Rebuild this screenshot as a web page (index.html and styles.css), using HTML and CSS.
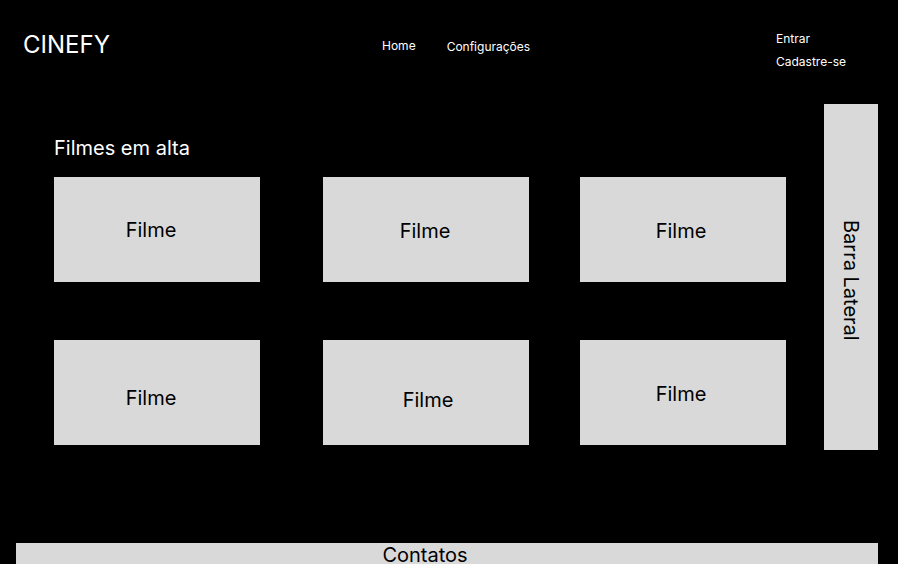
FILE: index.html
```html
<!DOCTYPE html>
<html lang="pt-BR">
<head>
<meta charset="utf-8">
<title>CINEFY</title>
<link rel="stylesheet" href="styles.css">
</head>
<body>
<header class="topbar">
  <div class="logo">CINEFY</div>
  <nav class="nav">
    <a class="nav-link nav-home" href="#">Home</a>
    <a class="nav-link nav-config" href="#">Configurações</a>
  </nav>
  <div class="auth">
    <a class="auth-link" href="#">Entrar</a>
    <a class="auth-link" href="#">Cadastre-se</a>
  </div>
</header>
<div class="middle">
  <main class="content">
    <h2 class="section-title">Filmes em alta</h2>
    <div class="grid">
      <div class="card card-1">Filme</div>
      <div class="card card-2">Filme</div>
      <div class="card card-3">Filme</div>
      <div class="card card-4">Filme</div>
      <div class="card card-5">Filme</div>
      <div class="card card-6">Filme</div>
    </div>
  </main>
  <aside class="sidebar"><span class="sidebar-label">Barra Lateral</span></aside>
</div>
<footer class="footer">Contatos</footer>
</body>
</html>
```

FILE: styles.css
```css
html, body {
  margin: 0;
  padding: 0;
  background: #000;
  height: 100%;
  overflow: hidden;
}
body {
  font-family: Inter, "Liberation Sans", sans-serif;
  color: #fff;
}
a {
  color: inherit;
  text-decoration: none;
}

.topbar {
  display: grid;
  grid-template-columns: 359px 394px 1fr;
  align-items: start;
  height: 104px;
  padding-left: 23px;
  box-sizing: border-box;
}
.logo {
  margin-top: 30px;
  font-size: 24px;
  line-height: 29px;
}
.nav {
  display: flex;
  align-items: flex-start;
  gap: 31px;
}
.nav-link {
  font-size: 12px;
  line-height: 15px;
}
.nav-home { margin-top: 38px; }
.nav-config { margin-top: 39px; }
.auth {
  display: flex;
  flex-direction: column;
  margin-top: 27px;
}
.auth-link {
  font-size: 12px;
  line-height: 23px;
}

.middle {
  display: flex;
  align-items: flex-start;
}
.content {
  flex: 1;
  padding-left: 54px;
  padding-top: 32px;
}
.section-title {
  margin: 0 0 17px;
  font-size: 20px;
  line-height: 24px;
  font-weight: 400;
}
.grid {
  display: grid;
  grid-template-columns: repeat(3, 206px);
  grid-auto-rows: 105px;
  column-gap: 57px;
  row-gap: 58px;
}
.card {
  background: #d9d9d9;
  color: #000;
  font-size: 20px;
  line-height: 24px;
  display: flex;
  align-items: center;
  justify-content: center;
  box-sizing: border-box;
}
.card-2, .card-5 {
  margin-left: 6px;
  margin-right: -6px;
}
.card-1 { padding-right: 12px; }
.card-2 { padding-right: 2px; padding-top: 2px; }
.card-3 { padding-right: 4px; padding-top: 2px; }
.card-4 { padding-right: 12px; padding-top: 10px; }
.card-5 { padding-left: 4px; padding-top: 14px; }
.card-6 { padding-right: 4px; padding-top: 2px; }

.sidebar {
  width: 54px;
  height: 346px;
  margin-right: 20px;
  background: #d9d9d9;
  color: #000;
  display: flex;
  align-items: center;
  justify-content: center;
  padding-top: 6px;
  box-sizing: border-box;
}
.sidebar-label {
  writing-mode: vertical-rl;
  font-size: 20px;
  line-height: 24px;
}

.footer {
  margin: 93px 20px 0 16px;
  height: 40px;
  background: #d9d9d9;
  color: #000;
  font-size: 20px;
  line-height: 24px;
  text-align: center;
  padding-right: 44px;
}
```
